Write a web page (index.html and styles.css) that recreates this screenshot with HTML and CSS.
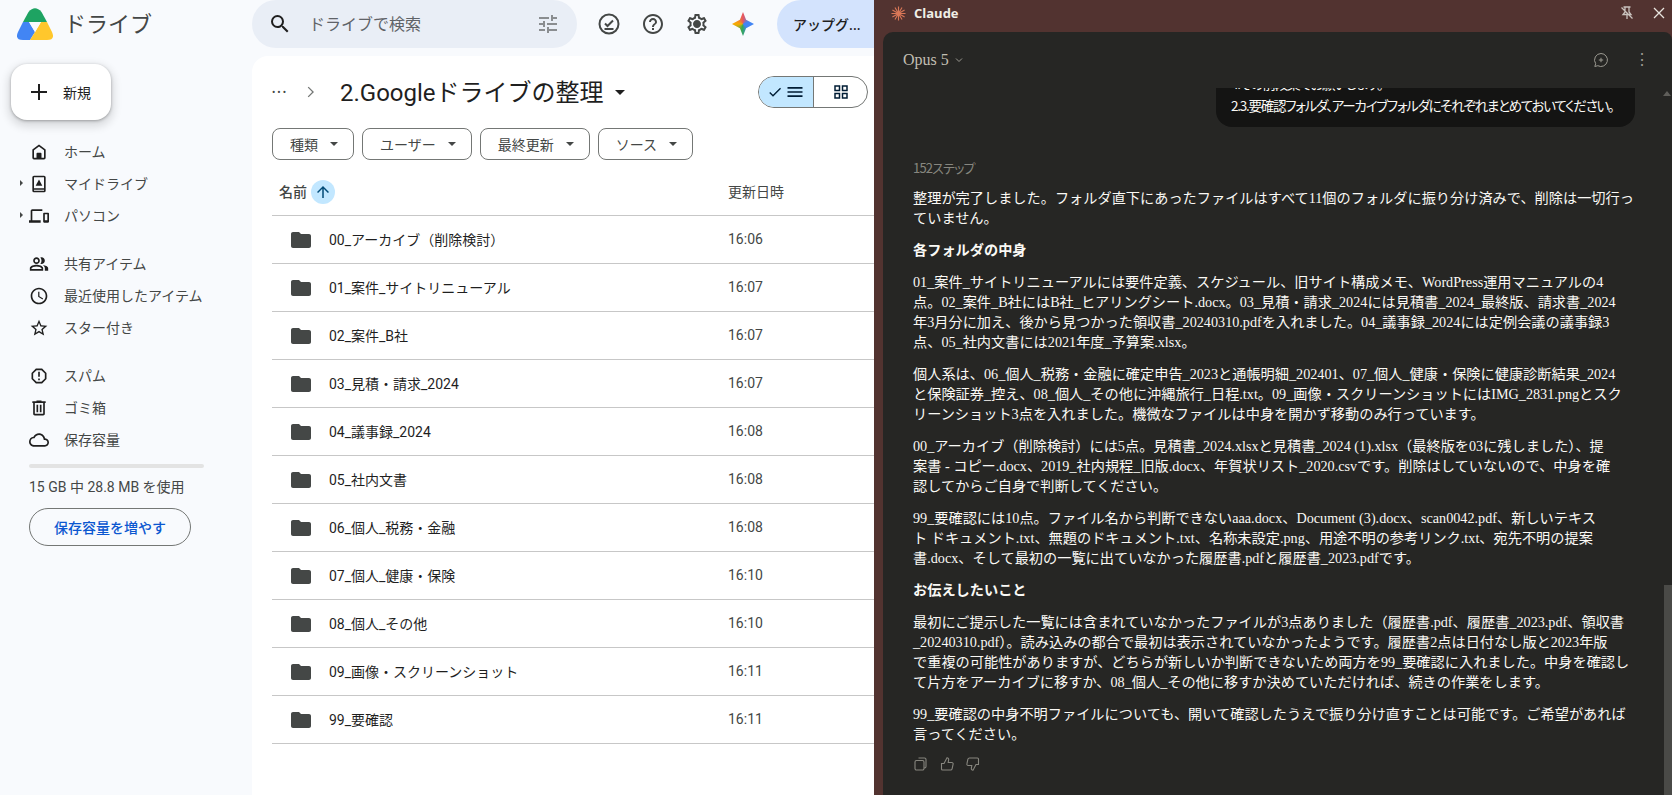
FILE: index.html
```html
<!DOCTYPE html>
<html lang="ja">
<head>
  <meta charset="UTF-8" />
  <meta name="viewport" content="width=device-width, initial-scale=1.0">
  <title>ドライブ - Claude</title>
  <link rel="stylesheet" href="styles.css">
</head>

<body>

  <!-- icons used more than once -->
  <svg class="sprite" xmlns="http://www.w3.org/2000/svg">
    <symbol id="i-folder" viewBox="0 0 24 24"><path d="M10 4H4c-1.1 0-1.99.9-1.99 2L2 18c0 1.1.9 2 2 2h16c1.1 0 2-.9 2-2V8c0-1.1-.9-2-2-2h-8l-2-2z"/></symbol>
  </svg>

  <div class="drive">
    <aside class="sidebar">
      <div class="brand">
        <svg class="logo" viewBox="0 0 36 32">
          <path fill="#1ea362" d="M11.5 4Q18 -3.500 24.500 4L30 14H6Z"/>
          <path fill="#4285f4" d="M6 14H12L18 24L13 32H6Q-2.500 32 1 24Z"/>
          <path fill="#ffc72c" d="M30 14H24L18 24L13 32H30Q38.500 32 35 24Z"/>
          <path fill="#f8fafd" d="M12 14H24L18 24Z"/>
        </svg>
        <span class="brand-name">ドライブ</span>
      </div>

      <button class="new-btn">
        <svg viewBox="0 0 24 24"><path d="M20 13h-7v7h-2v-7H4v-2h7V4h2v7h7z"/></svg>
        <span>新規</span>
      </button>

      <nav class="nav">
        <div class="nav-group">
          <a class="nav-row"><i class="slot"></i>
            <svg viewBox="0 0 24 24"><path d="M12 3 4 9v10a2 2 0 0 0 2 2h12a2 2 0 0 0 2-2V9l-8-6zm6 16h-3v-5a1 1 0 0 0-1-1h-4a1 1 0 0 0-1 1v5H6v-9l6-4.500 6 4.500v9z"/><path d="M10 15h4v5h-4z"/></svg>
            ホーム</a>
          <a class="nav-row"><i class="slot"><b class="arrow"></b></i>
            <svg viewBox="0 0 24 24"><path d="M18 2H6a2 2 0 0 0-2 2v16a2 2 0 0 0 2 2h12a2 2 0 0 0 2-2V4a2 2 0 0 0-2-2zm0 18H6v-1h12v1zm0-3H6V4h12v13z"/><path d="M12 6.500 8 14h8z"/></svg>
            マイドライブ</a>
          <a class="nav-row"><i class="slot"><b class="arrow"></b></i>
            <svg viewBox="0 0 24 24"><path d="M4 6h12V4H4c-1.100 0-2 .9-2 2v11H0v3h14v-3H4V6zm19 2h-5c-.55 0-1 .45-1 1v10c0 .55.45 1 1 1h5c.55 0 1-.45 1-1V9c0-.55-.45-1-1-1zm-1 9h-3v-7h3v7z"/></svg>
            パソコン</a>
        </div>
        <div class="nav-group">
          <a class="nav-row"><i class="slot"></i>
            <svg viewBox="0 0 24 24"><path d="M16.670 13.130C18.040 14.060 19 15.320 19 17v3h4v-3c0-2.180-3.570-3.470-6.330-3.870zM15 12c2.210 0 4-1.790 4-4s-1.790-4-4-4c-.47 0-.91.1-1.330.24C14.500 5.270 15 6.580 15 8s-.5 2.730-1.330 3.760c.42.14.86.24 1.330.24zM9 12c2.210 0 4-1.790 4-4s-1.790-4-4-4-4 1.790-4 4 1.790 4 4 4zm0-6c1.100 0 2 .9 2 2s-.9 2-2 2-2-.9-2-2 .9-2 2-2zm0 7c-2.670 0-8 1.340-8 4v3h16v-3c0-2.660-5.330-4-8-4zm6 5H3v-.99C3.200 16.290 6.300 15 9 15s5.800 1.290 6 2v1z"/></svg>
            共有アイテム</a>
          <a class="nav-row"><i class="slot"></i>
            <svg viewBox="0 0 24 24"><path d="M11.990 2C6.470 2 2 6.480 2 12s4.470 10 9.990 10C17.520 22 22 17.520 22 12S17.520 2 11.990 2zM12 20c-4.420 0-8-3.580-8-8s3.580-8 8-8 8 3.580 8 8-3.580 8-8 8zm.5-13H11v6l5.250 3.150.75-1.230-4.500-2.670z"/></svg>
            最近使用したアイテム</a>
          <a class="nav-row"><i class="slot"></i>
            <svg viewBox="0 0 24 24"><path d="M22 9.240l-7.190-.62L12 2 9.190 8.630 2 9.240l5.460 4.730L5.820 21 12 17.270 18.180 21l-1.630-7.030L22 9.240zM12 15.400l-3.760 2.270 1-4.280-3.320-2.880 4.380-.38L12 6.100l1.710 4.040 4.380.38-3.320 2.880 1 4.280L12 15.400z"/></svg>
            スター付き</a>
        </div>
        <div class="nav-group">
          <a class="nav-row"><i class="slot"></i>
            <svg viewBox="0 0 24 24"><path d="M15.730 3H8.270L3 8.270v7.460L8.270 21h7.460L21 15.730V8.270L15.730 3zM19 14.900 14.900 19H9.100L5 14.900V9.100L9.100 5h5.800L19 9.100v5.800z"/><path d="M11 7h2v6h-2zM11 15h2v2h-2z"/></svg>
            スパム</a>
          <a class="nav-row"><i class="slot"></i>
            <svg viewBox="0 0 24 24"><path d="M15 4V3H9v1H4v2h1v13c0 1.100.9 2 2 2h10c1.100 0 2-.9 2-2V6h1V4h-5zm2 15H7V6h10v13zM9 8h2v9H9zm4 0h2v9h-2z"/></svg>
            ゴミ箱</a>
          <a class="nav-row"><i class="slot"></i>
            <svg viewBox="0 0 24 24"><path d="M19.350 10.040C18.670 6.590 15.640 4 12 4 9.110 4 6.600 5.640 5.350 8.040 2.340 8.360 0 10.910 0 14c0 3.310 2.690 6 6 6h13c2.760 0 5-2.240 5-5 0-2.640-2.050-4.780-4.650-4.960zM19 18H6c-2.210 0-4-1.790-4-4 0-2.050 1.530-3.760 3.560-3.970l1.070-.11.5-.95C8.080 7.140 9.940 6 12 6c2.620 0 4.880 1.860 5.390 4.430l.3 1.500 1.530.11c1.560.1 2.780 1.410 2.780 2.960 0 1.650-1.350 3-3 3z"/></svg>
            保存容量</a>
        </div>
      </nav>

      <div class="storage">
        <div class="storage-bar"></div>
        <p class="storage-text">15 GB 中 28.8 MB を使用</p>
        <button class="storage-btn">保存容量を増やす</button>
      </div>
    </aside>

    <main class="main">
      <header class="topbar">
        <div class="search">
          <svg viewBox="0 0 24 24"><path d="M15.500 14h-.79l-.28-.27A6.471 6.471 0 0 0 16 9.500 6.500 6.500 0 1 0 9.500 16c1.610 0 3.090-.59 4.230-1.570l.27.28v.79l5 4.990L20.490 19l-4.990-5zm-6 0C7.010 14 5 11.990 5 9.500S7.010 5 9.500 5 14 7.010 14 9.500 11.990 14 9.500 14z"/></svg>
          <span class="search-text">ドライブで検索</span>
          <svg class="tune" viewBox="0 0 24 24"><path d="M3 17v2h6v-2H3zM3 5v2h10V5H3zm10 16v-2h8v-2h-8v-2h-2v6h2zM7 9v2H3v2h4v2h2V9H7zm14 4v-2H11v2h10zm-6-4h2V7h4V5h-4V3h-2v6z"/></svg>
        </div>
        <div class="top-icons">
          <svg viewBox="0 0 24 24" class="stroke-icon"><circle cx="12" cy="12" r="9.500"/><path d="m8 11.500 2.500 2.500L16 8.500M7.500 17h9"/></svg>
          <svg viewBox="0 0 24 24"><path d="M11 18h2v-2h-2v2zm1-16C6.480 2 2 6.480 2 12s4.480 10 10 10 10-4.480 10-10S17.520 2 12 2zm0 18c-4.410 0-8-3.590-8-8s3.590-8 8-8 8 3.590 8 8-3.590 8-8 8zm0-14c-2.210 0-4 1.790-4 4h2c0-1.100.9-2 2-2s2 .9 2 2c0 2-3 1.750-3 5h2c0-2.250 3-2.500 3-5 0-2.210-1.790-4-4-4z"/></svg>
          <svg viewBox="0 0 24 24"><path d="M19.430 12.980c.04-.32.07-.64.07-.98 0-.34-.03-.66-.07-.98l2.110-1.650c.19-.15.24-.42.12-.64l-2-3.460c-.09-.16-.26-.25-.44-.25-.06 0-.12.01-.17.03l-2.490 1c-.52-.4-1.080-.73-1.690-.98l-.38-2.650C14.460 2.180 14.250 2 14 2h-4c-.25 0-.46.18-.49.42l-.38 2.650c-.61.25-1.170.59-1.690.98l-2.490-1c-.06-.02-.12-.03-.18-.03-.17 0-.34.09-.43.25l-2 3.460c-.13.22-.07.49.12.64l2.110 1.650c-.04.32-.07.65-.07.98 0 .33.03.66.07.98l-2.110 1.650c-.19.15-.24.42-.12.64l2 3.460c.09.16.26.25.44.25.06 0 .12-.01.17-.03l2.490-1c.52.4 1.080.73 1.690.98l.38 2.650c.03.24.24.42.49.42h4c.25 0 .46-.18.49-.42l.38-2.650c.61-.25 1.170-.59 1.690-.98l2.490 1c.06.02.12.03.18.03.17 0 .34-.09.43-.25l2-3.460c.12-.22.07-.49-.12-.64l-2.110-1.650zm-1.980-1.710c.04.31.05.52.05.73 0 .21-.02.43-.05.73l-.14 1.130.89.7 1.080.84-.7 1.210-1.270-.51-1.040-.42-.9.68c-.43.32-.84.56-1.250.73l-1.060.43-.16 1.130-.2 1.350h-1.400l-.19-1.350-.16-1.130-1.060-.43c-.43-.18-.83-.41-1.230-.71l-.91-.7-1.060.43-1.270.51-.7-1.210 1.080-.84.89-.7-.14-1.130c-.03-.31-.05-.54-.05-.74s.02-.43.05-.73l.14-1.130-.89-.7-1.080-.84.7-1.210 1.270.51 1.040.42.9-.68c.43-.32.84-.56 1.250-.73l1.060-.43.16-1.130.2-1.350h1.390l.19 1.350.16 1.130 1.060.43c.43.18.83.41 1.230.71l.91.7 1.060-.43 1.270-.51.7 1.210-1.070.85-.89.7.14 1.130zM12 8c-2.210 0-4 1.790-4 4s1.790 4 4 4 4-1.790 4-4-1.790-4-4-4z"/></svg>
          <div class="spark"></div>
        </div>
        <button class="upgrade">アップグ...</button>
      </header>

      <section class="card">
        <div class="crumbs">
          <span class="crumb-dots">•••</span>
          <svg class="crumb-sep" viewBox="0 0 24 24"><path d="M8.600 5.400 10 4l8 8-8 8-1.400-1.400L15.200 12z"/></svg>
          <h1 class="folder-title">2.Googleドライブの整理</h1>
          <i class="caret caret-big"></i>
          <div class="view-toggle">
            <span class="view-btn selected">
              <svg class="view-check" viewBox="0 0 24 24"><path d="M9 16.200 4.800 12l-1.400 1.400L9 19 21 7l-1.400-1.400z"/></svg>
              <svg class="view-lines" viewBox="0 0 24 24"><path d="M3 18h18v-2H3zM3 13h18v-2H3zM3 6v2h18V6z"/></svg>
            </span>
            <span class="view-btn">
              <svg class="view-grid" viewBox="0 0 24 24"><path d="M3 3h8v8H3zm2 2v4h4V5zM13 3h8v8h-8zm2 2v4h4V5zM3 13h8v8H3zm2 2v4h4v-4zM13 13h8v8h-8zm2 2v4h4v-4z"/></svg>
            </span>
          </div>
        </div>

        <div class="filters">
          <button class="chip">種類<i class="caret"></i></button>
          <button class="chip">ユーザー<i class="caret"></i></button>
          <button class="chip">最終更新<i class="caret"></i></button>
          <button class="chip">ソース<i class="caret"></i></button>
        </div>

        <div class="list-head">
          <div class="col-name">名前
            <span class="sort-btn"><svg viewBox="0 0 24 24"><path d="M4 12l1.410 1.410L11 7.830V20h2V7.830l5.580 5.590L20 12l-8-8z"/></svg></span>
          </div>
          <div class="col-date">更新日時</div>
        </div>

        <div class="row"><svg class="folder"><use href="#i-folder"/></svg><div class="col-name">00_アーカイブ&#xFF08;削除検討&#xFF09;</div><div class="col-date">16:06</div></div>
        <div class="row"><svg class="folder"><use href="#i-folder"/></svg><div class="col-name">01_案件_サイトリニューアル</div><div class="col-date">16:07</div></div>
        <div class="row"><svg class="folder"><use href="#i-folder"/></svg><div class="col-name">02_案件_B社</div><div class="col-date">16:07</div></div>
        <div class="row"><svg class="folder"><use href="#i-folder"/></svg><div class="col-name">03_見積・請求_2024</div><div class="col-date">16:07</div></div>
        <div class="row"><svg class="folder"><use href="#i-folder"/></svg><div class="col-name">04_議事録_2024</div><div class="col-date">16:08</div></div>
        <div class="row"><svg class="folder"><use href="#i-folder"/></svg><div class="col-name">05_社内文書</div><div class="col-date">16:08</div></div>
        <div class="row"><svg class="folder"><use href="#i-folder"/></svg><div class="col-name">06_個人_税務・金融</div><div class="col-date">16:08</div></div>
        <div class="row"><svg class="folder"><use href="#i-folder"/></svg><div class="col-name">07_個人_健康・保険</div><div class="col-date">16:10</div></div>
        <div class="row"><svg class="folder"><use href="#i-folder"/></svg><div class="col-name">08_個人_その他</div><div class="col-date">16:10</div></div>
        <div class="row"><svg class="folder"><use href="#i-folder"/></svg><div class="col-name">09_画像・スクリーンショット</div><div class="col-date">16:11</div></div>
        <div class="row"><svg class="folder"><use href="#i-folder"/></svg><div class="col-name">99_要確認</div><div class="col-date">16:11</div></div>
      </section>
    </main>
  </div>

  <div class="claude">
    <div class="titlebar">
      <svg class="claude-logo" viewBox="0 0 16 16"><path d="M.5 8h15M8 .5v15M14.500 4.250l-13 7.500M11.750 1.500l-7.500 13M4.250 1.500l7.500 13M1.500 4.250l13 7.500"/></svg>
      <span class="claude-name">Claude</span>
      <svg class="bar-icon pin-off" viewBox="0 0 16 16"><path d="M4.500 2h7M6 2v5L4 9.500h8L10 7V2M8 9.500V14M2.500 2.500l11 11"/></svg>
      <svg class="bar-icon" viewBox="0 0 16 16"><path d="m3 3 10 10M13 3 3 13"/></svg>
    </div>

    <div class="chat">
      <div class="chat-head">
        <span class="model">Opus 5</span>
        <svg class="model-arrow" viewBox="0 0 10 10"><path d="m2 3.500 3 3 3-3"/></svg>
        <svg class="head-icon new-chat" viewBox="0 0 16 16"><path d="M8 1.500a6.500 6.500 0 1 1-3.200 12.200L1.800 14.500l.9-2.800A6.500 6.500 0 0 1 8 1.500zM8 5.800v4.400M5.800 8h4.400"/></svg>
        <span class="head-dots">⋮</span>
      </div>

      <div class="thread">
        <div class="bubble">
          <p>4.その前段案でお願いします。</p>
          <p>2.3.要確認フォルダ、アーカイブフォルダにそれぞれまとめておいてください。</p>
        </div>

        <div class="steps">152ステップ</div>

        <!-- line breaks follow the screenshot, the serif here is narrower than the original one -->
        <div class="answer">
          <p>整理が完了しました。フォルダ直下にあったファイルはすべて11個のフォルダに振り分け済みで、削除は一切行っ<br>ていません。</p>
          <p><strong>各フォルダの中身</strong></p>
          <p>01_案件_サイトリニューアルには要件定義、スケジュール、旧サイト構成メモ、WordPress運用マニュアルの4<br>点。02_案件_B社にはB社_ヒアリングシート.docx。03_見積・請求_2024には見積書_2024_最終版、請求書_2024<br>年3月分に加え、後から見つかった領収書_20240310.pdfを入れました。04_議事録_2024には定例会議の議事録3<br>点、05_社内文書には2021年度_予算案.xlsx。</p>
          <p>個人系は、06_個人_税務・金融に確定申告_2023と通帳明細_202401、07_個人_健康・保険に健康診断結果_2024<br>と保険証券_控え、08_個人_その他に沖縄旅行_日程.txt。09_画像・スクリーンショットにはIMG_2831.pngとスク<br>リーンショット3点を入れました。機微なファイルは中身を開かず移動のみ行っています。</p>
          <p>00_アーカイブ&#xFF08;削除検討&#xFF09;には5点。見積書_2024.xlsxと見積書_2024 (1).xlsx&#xFF08;最終版を03に残しました&#xFF09;、提<br>案書 - コピー.docx、2019_社内規程_旧版.docx、年賀状リスト_2020.csvです。削除はしていないので、中身を確<br>認してからご自身で判断してください。</p>
          <p>99_要確認には10点。ファイル名から判断できないaaa.docx、Document (3).docx、scan0042.pdf、新しいテキス<br>ト ドキュメント.txt、無題のドキュメント.txt、名称未設定.png、用途不明の参考リンク.txt、宛先不明の提案<br>書.docx、そして最初の一覧に出ていなかった履歴書.pdfと履歴書_2023.pdfです。</p>
          <p><strong>お伝えしたいこと</strong></p>
          <p>最初にご提示した一覧には含まれていなかったファイルが3点ありました&#xFF08;履歴書.pdf、履歴書_2023.pdf、領収書<br>_20240310.pdf&#xFF09;。読み込みの都合で最初は表示されていなかったようです。履歴書2点は日付なし版と2023年版<br>で重複の可能性がありますが、どちらが新しいか判断できないため両方を99_要確認に入れました。中身を確認し<br>て片方をアーカイブに移すか、08_個人_その他に移すか決めていただければ、続きの作業をします。</p>
          <p>99_要確認の中身不明ファイルについても、開いて確認したうえで振り分け直すことは可能です。ご希望があれば<br>言ってください。</p>
        </div>

        <div class="actions">
          <svg viewBox="0 0 16 16"><path d="M5.500 2h6a1.500 1.500 0 0 1 1.500 1.500v7a1.500 1.500 0 0 1-1.500 1.500M3.500 4.500h6A1.500 1.500 0 0 1 11 6v6.500A1.500 1.500 0 0 1 9.500 14h-6A1.500 1.500 0 0 1 2 12.500V6a1.500 1.500 0 0 1 1.500-1.500z"/></svg>
          <svg viewBox="0 0 16 16"><path d="M2.500 7.500h2.500L8 1.800c1.300 0 1.900 1 1.600 2.200L9.200 6.500h3.600c.9 0 1.500.8 1.300 1.600l-1 4.700c-.2.7-.7 1.200-1.500 1.200H3.500c-.6 0-1-.4-1-1z"/></svg>
          <svg viewBox="0 0 16 16"><path d="M13.500 8.500H11L8 14.200c-1.300 0-1.900-1-1.600-2.200l.4-2.500H3.200c-.9 0-1.500-.8-1.300-1.600l1-4.700C3.100 2.500 3.600 2 4.400 2h8.100c.6 0 1 .4 1 1z"/></svg>
        </div>

        <div class="scroll-up"></div>
        <div class="scroll-thumb"></div>
      </div>
    </div>
  </div>

</body>
</html>
```

FILE: styles.css
```css
* {
  box-sizing: border-box;
}

html,
body {
  height: 100%;
}

body {
  margin: 0;
  display: flex;
  overflow: hidden;
  background-color: #f8fafd;
  color: #1f1f1f;
  font-family: Roboto, "Noto Sans CJK JP", sans-serif;
  font-size: 14px;
}

p {
  margin: 0;
}

button {
  font-family: inherit;
  cursor: pointer;
}

svg {
  display: block;
  flex: none;
  fill: #444746;
}

.sprite {
  display: none;
}

/* ---------- drive side ---------- */

.drive {
  display: flex;
  width: 874px;
  flex: none;
}

.sidebar {
  width: 252px;
  flex: none;
}

.brand {
  display: flex;
  align-items: center;
  height: 48px;
  padding-left: 17px;
}

.logo {
  width: 36px;
  height: 32px;
}

.brand-name {
  margin-left: 11px;
  padding-bottom: 4px;
  font-size: 22px;
  color: #444746;
}

.new-btn {
  display: flex;
  align-items: center;
  gap: 12px;
  width: 100px;
  height: 56px;
  margin: 16px 0 0 11px;
  padding: 0 0 0 16px;
  border: 0;
  border-radius: 16px;
  background-color: white;
  box-shadow: 0 1px 3px rgba(0, 0, 0, 0.3), 0 4px 8px 3px rgba(0, 0, 0, 0.12);
  font-size: 14px;
  color: #1f1f1f;
}

.new-btn svg {
  width: 24px;
  height: 24px;
  fill: #1f1f1f;
}

.nav {
  margin-top: 16px;
}

.nav-group {
  margin-bottom: 16px;
}

.nav-row {
  display: flex;
  align-items: center;
  height: 32px;
  padding: 0 0 2px 20px;
  color: #444746;
}

.nav-row svg {
  width: 20px;
  height: 20px;
  margin: 2px 15px 0 0;
  fill: #1f1f1f;
}

.slot {
  width: 9px;
  flex: none;
}

.arrow {
  display: block;
  width: 0;
  height: 0;
  border-left: 3px solid #444746;
  border-top: 3px solid transparent;
  border-bottom: 3px solid transparent;
}

.storage {
  margin-top: -8px;
  padding-left: 29px;
}

.storage-bar {
  width: 175px;
  height: 4px;
  background-color: #e3e3e3;
  border-radius: 2px;
}

.storage-text {
  margin-top: 9px;
  line-height: 20px;
  font-size: 14px;
  color: #444746;
}

.storage-btn {
  display: block;
  width: 162px;
  height: 38px;
  margin-top: 11px;
  padding: 0;
  border: 1px solid #747775;
  border-radius: 19px;
  background: none;
  font-size: 14px;
  font-weight: 500;
  color: #0b57d0;
}

.main {
  flex: 1;
  min-width: 0;
  display: flex;
  flex-direction: column;
}

.topbar {
  display: flex;
  align-items: center;
  height: 48px;
  flex: none;
}

.search {
  display: flex;
  align-items: center;
  width: 325px;
  height: 48px;
  padding: 0 17px 0 16px;
  border-radius: 24px;
  background-color: #e9eef6;
}

.search svg {
  width: 24px;
  height: 24px;
  fill: #1f1f1f;
}

.search .tune {
  fill: #8a8d90;
}

.search-text {
  flex: 1;
  margin-left: 17px;
  padding-bottom: 2px;
  font-size: 16px;
  color: #5f6368;
}

.top-icons {
  display: flex;
  align-items: center;
  gap: 20px;
  margin-left: 20px;
}

.top-icons svg {
  width: 24px;
  height: 24px;
}

.stroke-icon {
  fill: none !important;
  stroke: #444746;
  stroke-width: 2;
}

.spark {
  width: 22px;
  height: 24px;
  margin-left: 3px;
  background: conic-gradient(#e8565f 0deg, #4285f4 70deg, #4285f4 130deg, #34a853 190deg, #f9ab00 270deg, #e8565f 360deg);
  clip-path: polygon(50% 0, 64% 32%, 100% 50%, 64% 68%, 50% 100%, 36% 68%, 0 50%, 36% 32%);
}

.upgrade {
  margin-left: auto;
  width: 97px;
  height: 48px;
  padding: 0 0 0 16px;
  border: 0;
  border-radius: 24px 0 0 24px;
  background-color: #d3e3fd;
  text-align: left;
  font-size: 14px;
  font-weight: 500;
  color: #1f1f1f;
  white-space: nowrap;
}

.card {
  flex: 1;
  margin-top: 8px;
  padding: 20px 0 0 20px;
  background-color: white;
  border-radius: 16px 0 0 0;
}

.crumbs {
  display: flex;
  align-items: center;
  height: 32px;
}

.crumb-dots {
  width: 20px;
  font-size: 10px;
  letter-spacing: 2px;
  white-space: nowrap;
  color: #444746;
}

.crumb-sep {
  width: 16px;
  height: 16px;
  margin-left: 10px;
  fill: #747775;
}

.folder-title {
  margin: 0 0 0 22px;
  padding-bottom: 4px;
  font-size: 24px;
  font-weight: 400;
  color: #1f1f1f;
}

.caret {
  display: inline-block;
  width: 0;
  height: 0;
  margin-left: 12px;
  border-left: 4px solid transparent;
  border-right: 4px solid transparent;
  border-top: 4px solid #444746;
}

.caret-big {
  margin-left: 11px;
  border-left-width: 5px;
  border-right-width: 5px;
  border-top-width: 5px;
  border-top-color: #1f1f1f;
}

.view-toggle {
  display: flex;
  width: 110px;
  height: 32px;
  margin-left: auto;
  margin-right: 6px;
  border: 1px solid #747775;
  border-radius: 16px;
  overflow: hidden;
}

.view-btn {
  flex: 1;
  display: flex;
  align-items: center;
  justify-content: center;
}

.view-btn.selected {
  flex: none;
  width: 55px;
  gap: 2px;
  background-color: #c2e7ff;
  border-right: 1px solid #747775;
}

.view-btn svg {
  fill: #001d35;
}

.view-check {
  width: 16px;
  height: 16px;
}

.view-lines {
  width: 20px;
  height: 20px;
}

.view-grid {
  width: 18px;
  height: 18px;
}

.filters {
  display: flex;
  gap: 8px;
  margin-top: 20px;
}

.chip {
  display: flex;
  align-items: center;
  height: 32px;
  padding: 0 15px 0 17px;
  border: 1px solid #747775;
  border-radius: 8px;
  background: none;
  font-size: 14px;
  color: #444746;
}

.list-head,
.row {
  display: flex;
  align-items: center;
  border-bottom: 1px solid #c7c7c7;
}

.list-head {
  height: 56px;
  padding: 8px 0 0 7px;
}

.list-head .col-name {
  display: flex;
  align-items: center;
  gap: 4px;
  font-weight: 500;
  color: #444746;
}

.sort-btn {
  display: flex;
  align-items: center;
  justify-content: center;
  width: 24px;
  height: 24px;
  margin-top: 2px;
  border-radius: 50%;
  background-color: #c2e7ff;
}

.sort-btn svg {
  width: 18px;
  height: 18px;
  fill: #004a77;
}

.row {
  height: 48px;
  padding-left: 17px;
}

.folder {
  width: 24px;
  height: 24px;
  margin-right: 16px;
}

.col-name {
  flex: 1;
  padding-bottom: 2px;
  color: #1f1f1f;
}

.col-date {
  width: 146px;
  flex: none;
  padding-bottom: 2px;
  color: #444746;
}

/* ---------- claude panel ---------- */

.claude {
  flex: 1;
  min-width: 0;
  display: flex;
  flex-direction: column;
  background-color: #523330;
}

.titlebar {
  display: flex;
  align-items: center;
  height: 32px;
  flex: none;
  padding: 0 5px 6px 17px;
}

.claude-logo {
  width: 15px;
  height: 15px;
  fill: none;
  stroke: #d97757;
  stroke-width: 1.2;
}

.claude-name {
  margin-left: 8px;
  font-family: "Open Sans", sans-serif;
  font-size: 13px;
  font-weight: 700;
  color: #f0eee6;
}

.bar-icon {
  width: 16px;
  height: 16px;
  fill: none;
  stroke: #e8e4de;
  stroke-width: 1.3;
}

.pin-off {
  margin: 0 16px 0 auto;
  stroke: #c9c2bd;
}

.chat {
  flex: 1;
  min-height: 0;
  display: flex;
  flex-direction: column;
  margin-left: 9px;
  background-color: #262624;
  border-radius: 10px 8px 0 0;
}

.chat-head {
  display: flex;
  align-items: center;
  height: 56px;
  flex: none;
  padding: 0 22px 0 20px;
}

.model {
  font-family: "Liberation Serif", serif;
  font-size: 16px;
  color: #c2bfb3;
}

.model-arrow {
  width: 10px;
  height: 10px;
  margin-left: 5px;
  fill: none;
  stroke: #9c9a92;
}

.head-icon {
  width: 16px;
  height: 16px;
  fill: none;
  stroke: #9c9a92;
  margin-left: auto;
}

.new-chat {
  margin-right: 25px;
}

.head-dots {
  font-size: 16px;
  line-height: 1;
  color: #9c9a92;
}

.thread {
  position: relative;
  flex: 1;
  min-height: 0;
  padding: 0 37px 0 30px;
  font-family: "Liberation Serif", "Noto Sans CJK JP", serif;
  font-size: 14.2px;
  line-height: 20px;
  color: #faf9f5;
}

.bubble {
  display: flex;
  flex-direction: column;
  justify-content: flex-end;
  width: 419px;
  height: 39px;
  margin-left: auto;
  padding: 0 15px 11px;
  overflow: hidden;
  background-color: #141413;
  border-radius: 0 0 16px 16px;
  font-family: "Noto Sans CJK JP", sans-serif;
  font-size: 13.5px;
  line-height: 22px;
  letter-spacing: -1.25px;
  font-feature-settings: "palt";
  white-space: nowrap;
}

.bubble p {
  flex: none;
}

.steps {
  margin-top: 31px;
  font-family: "Noto Sans CJK JP", sans-serif;
  font-feature-settings: "palt";
  font-size: 13px;
  letter-spacing: -0.8px;
  color: #87867f;
}

.answer {
  margin-top: 10px;
  white-space: nowrap;
}

.answer p {
  margin-bottom: 12px;
}

.answer strong {
  font-weight: 700;
}

.actions {
  display: flex;
  gap: 10px;
  margin-top: 1px;
}

.actions svg {
  width: 16px;
  height: 16px;
  fill: none;
  stroke: #87867f;
  stroke-width: 1.1;
}

.scroll-up {
  position: absolute;
  top: 3px;
  right: 1px;
  width: 0;
  height: 0;
  border-left: 4px solid transparent;
  border-right: 4px solid transparent;
  border-bottom: 5px solid #5f5e5a;
}

.scroll-thumb {
  position: absolute;
  top: 497px;
  bottom: 0;
  right: 0;
  width: 8px;
  background-color: #4a4a47;
}
```
